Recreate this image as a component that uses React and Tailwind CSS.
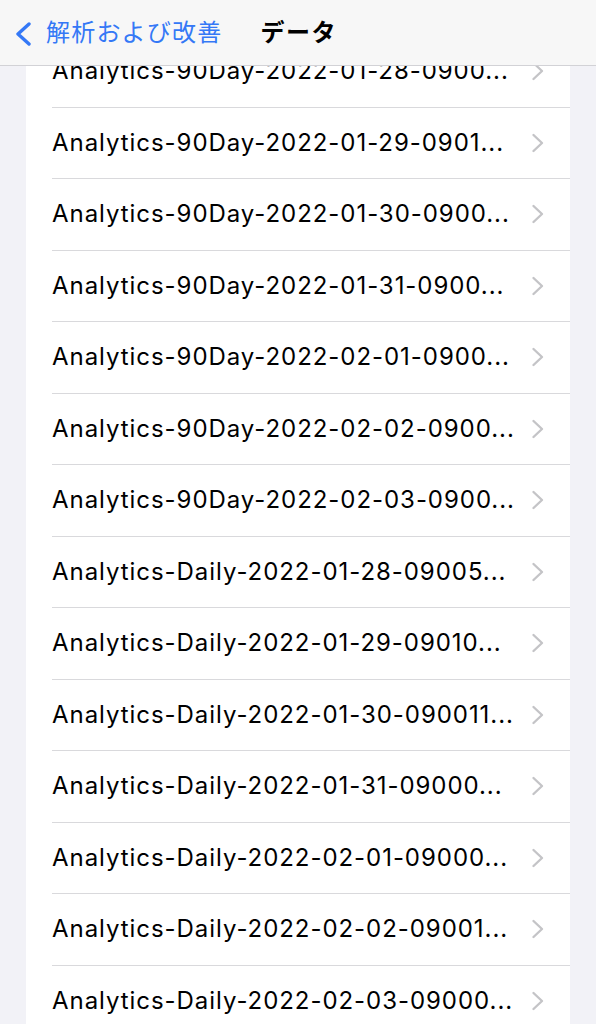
import React from 'react';

const rows = [
  'Analytics-90Day-2022-01-28-0900...',
  'Analytics-90Day-2022-01-29-0901...',
  'Analytics-90Day-2022-01-30-0900...',
  'Analytics-90Day-2022-01-31-0900...',
  'Analytics-90Day-2022-02-01-0900...',
  'Analytics-90Day-2022-02-02-0900...',
  'Analytics-90Day-2022-02-03-0900...',
  'Analytics-Daily-2022-01-28-09005...',
  'Analytics-Daily-2022-01-29-09010...',
  'Analytics-Daily-2022-01-30-090011...',
  'Analytics-Daily-2022-01-31-09000...',
  'Analytics-Daily-2022-02-01-09000...',
  'Analytics-Daily-2022-02-02-09001...',
  'Analytics-Daily-2022-02-03-09000...',
];

function Chevron() {
  return (
    <svg width="13" height="20" viewBox="0 0 13 20" fill="none">
      <path d="M2.5 2l8.5 8-8.5 8" stroke="#c4c4c7" strokeWidth="2.4" strokeLinecap="round" strokeLinejoin="round" />
    </svg>
  );
}

export default function App() {
  return (
    <div
      className="relative h-[1024px] w-[596px] overflow-hidden bg-[#f2f2f7]"
      style={{ fontFamily: "Inter, 'Noto Sans CJK JP', sans-serif" }}
    >
      {/* nav bar */}
      <header className="absolute inset-x-0 top-0 z-10 flex h-[66px] items-center border-b border-[#d2d2d6] bg-[#f7f7f7]">
        <div className="flex items-center pl-[14px] text-[#3478f6]">
          <svg width="20" height="24" viewBox="0 0 20 24" fill="none" className="mt-[2px]">
            <path d="M15 2L4 12l11 10" stroke="#3478f6" strokeWidth="3.4" strokeLinecap="round" strokeLinejoin="round" />
          </svg>
          <span className="ml-[12px] text-[24px] leading-none tracking-[1.2px]">解析および改善</span>
        </div>
        <h1 className="ml-[38px] text-[24px] font-bold leading-none tracking-[1.5px] text-black">データ</h1>
      </header>

      {/* list */}
      <div className="pt-[36px] pl-[26px] pr-[26px]">
        <div className="bg-white pl-[26px]">
          {rows.map((r, i) => (
            <div
              key={i}
              className="flex h-[71.5px] items-center justify-between border-b border-[#d9d9dc] pr-[26px]"
            >
              <span className="whitespace-nowrap text-[24px] tracking-[0.95px] text-black">{r}</span>
              <Chevron />
            </div>
          ))}
        </div>
      </div>
    </div>
  );
}
